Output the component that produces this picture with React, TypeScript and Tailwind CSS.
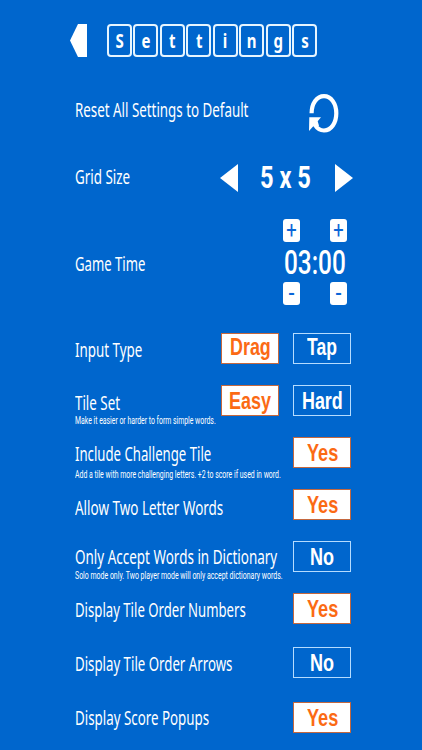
import { useLayoutEffect, useRef, useState } from "react";
import clsx from "clsx";

type FitTextProps = {
  text: string;
  width: number;
  className?: string;
};

// Condenses a line of text horizontally so that it takes exactly `width` pixels.
function FitText({ text, width, className }: FitTextProps) {
  const ref = useRef<HTMLSpanElement>(null);
  const [scale, setScale] = useState(1);

  useLayoutEffect(() => {
    if (ref.current) {
      setScale(width / ref.current.offsetWidth);
    }
  }, [text, width]);

  return (
    <span className={clsx("block", className)} style={{ width }}>
      <span ref={ref} className="inline-block origin-left whitespace-nowrap align-top" style={{ transform: `scaleX(${scale})` }}>
        {text}
      </span>
    </span>
  );
}

type Option = { text: string; width: number; on: boolean; pad: string };

type Row = {
  label: string;
  width: number;
  rowClass: string;
  labelClass: string;
  note?: string;
  noteWidth?: number;
  noteClass?: string;
  options: Option[];
};

const TITLE = ["S", "e", "t", "t", "i", "n", "g", "s"];

const LABEL = "font-['Noto_Sans',sans-serif] text-[19px] leading-5";

const ROWS: Row[] = [
  {
    label: "Input Type",
    width: 67.5,
    rowClass: "mt-[28px]",
    labelClass: "pt-[7px]",
    options: [
      { text: "Drag", width: 41, on: true, pad: "pb-[3px]" },
      { text: "Tap", width: 30, on: false, pad: "pb-[3px]" },
    ],
  },
  {
    label: "Tile Set",
    width: 45,
    rowClass: "mt-[21px]",
    labelClass: "pt-[8px]",
    note: "Make it easier or harder to form simple words.",
    noteWidth: 141,
    noteClass: "mt-[1px]",
    options: [
      { text: "Easy", width: 42, on: true, pad: "pt-px" },
      { text: "Hard", width: 41, on: false, pad: "pt-px" },
    ],
  },
  {
    label: "Include Challenge Tile",
    width: 136,
    rowClass: "mt-[21px]",
    labelClass: "pt-[7px]",
    note: "Add a tile with more challenging letters. +2 to score if used in word.",
    noteWidth: 206,
    noteClass: "mt-[4px]",
    options: [{ text: "Yes", width: 31, on: true, pad: "" }],
  },
  {
    label: "Allow Two Letter Words",
    width: 148,
    rowClass: "mt-[21px]",
    labelClass: "pt-[9px]",
    options: [{ text: "Yes", width: 31, on: true, pad: "" }],
  },
  {
    label: "Only Accept Words in Dictionary",
    width: 202,
    rowClass: "mt-[21px]",
    labelClass: "pt-[6px]",
    note: "Solo mode only. Two player mode will only accept dictionary words.",
    noteWidth: 208,
    noteClass: "mt-[2px]",
    options: [{ text: "No", width: 24, on: false, pad: "pt-px" }],
  },
  {
    label: "Display Tile Order Numbers",
    width: 171,
    rowClass: "mt-[21px]",
    labelClass: "pt-[7px]",
    options: [{ text: "Yes", width: 31, on: true, pad: "" }],
  },
  {
    label: "Display Tile Order Arrows",
    width: 157.5,
    rowClass: "mt-[23px]",
    labelClass: "pt-[7px]",
    options: [{ text: "No", width: 24, on: false, pad: "pt-px" }],
  },
  {
    label: "Display Score Popups",
    width: 134,
    rowClass: "mt-[24px]",
    labelClass: "pt-[6px]",
    options: [{ text: "Yes", width: 31, on: true, pad: "" }],
  },
];

function OptionButton({ text, width, on, pad }: Option) {
  return (
    <button
      type="button"
      className={clsx(
        "flex h-[31px] w-[58px] items-center justify-center border font-['Liberation_Sans',sans-serif] text-[24px] leading-6 font-bold",
        on ? "border-[#c4683f] bg-white text-[#fb6a14]" : "border-[#b5dcff] text-white",
        pad
      )}
    >
      <FitText text={text} width={width} />
    </button>
  );
}

function StepButton({ sign }: { sign: "+" | "-" }) {
  return (
    <button
      type="button"
      className="flex h-[23px] w-[17px] items-center justify-center rounded-[3px] bg-white font-['Roboto',sans-serif] leading-5 text-[#0a66d8]"
    >
      {sign === "+" ? (
        <span className="scale-x-[0.8] text-[23px]">+</span>
      ) : (
        <span className="text-[18px] leading-4 font-bold">-</span>
      )}
    </button>
  );
}

export default function App() {
  return (
    <div className="h-[750px] w-[422px] overflow-hidden bg-[#0066cd] text-white">
      <header className="flex h-[84px] items-start pt-6 pl-[70px]">
        <svg width="17" height="33" viewBox="0 0 17 33" fill="#fff">
          <path d="M0 16.5 8 0h9v33H8z" />
        </svg>
        <div className="ml-5 flex gap-[1.6px]">
          {TITLE.map((letter, i) => (
            <span
              key={i}
              className="flex h-[33px] w-[24.9px] items-center justify-center rounded-[4px] border-2 border-[#e6f5ff] pt-px font-['Noto_Sans',sans-serif] text-[20px] leading-5 font-bold"
            >
              <span className="scale-x-75">{letter}</span>
            </span>
          ))}
        </div>
      </header>

      <main className="ml-[75px] w-[278px]">
        <div className="flex h-[66px] items-start justify-between">
          <FitText text="Reset All Settings to Default" width={173.5} className={clsx(LABEL, "mt-4")} />
          <svg className="mt-[9px] mr-[13px]" width="33" height="41" viewBox="0 0 33 41">
            <path
              d="M4.6 20.3C4.6 10.5 9.8 3.1 17 3.1s12.300 7.600 12.300 17.200S24.200 37.500 17 37.500c-3.700 0-6.800-1.900-9-5.500"
              fill="none"
              stroke="#fff"
              strokeWidth="4.2"
            />
            <path d="M2.3 24.300h11.700l-3.300 4 1.300 4.500-3.200 2L6.500 33 2 38z" fill="#fff" />
          </svg>
        </div>

        <div className="flex h-[69px] items-start justify-between">
          <FitText text="Grid Size" width={55} className={clsx(LABEL, "mt-[17px]")} />
          <div className="mt-[14px] flex h-7 items-center">
            <svg width="18" height="28" viewBox="0 0 18 28" fill="#fff">
              <path d="M0 14 18 0v28z" />
            </svg>
            <FitText
              text="5 x 5"
              width={51}
              className="mr-6 mb-[3px] ml-[22px] font-['Roboto',sans-serif] text-[32px] leading-8 font-bold"
            />
            <svg width="18" height="28" viewBox="0 0 18 28" fill="#fff">
              <path d="M18 14 0 0v28z" />
            </svg>
          </div>
        </div>

        <div className="flex h-[86px] items-start justify-between">
          <FitText text="Game Time" width={70.5} className={clsx(LABEL, "mt-[35px]")} />
          <div className="mr-[6px] w-16">
            <div className="flex justify-between">
              <StepButton sign="+" />
              <StepButton sign="+" />
            </div>
            <FitText
              text="03:00"
              width={62}
              className="mt-[6px] mb-1 ml-px h-[30px] font-['Roboto',sans-serif] text-[33px] leading-[30px] font-medium"
            />
            <div className="flex justify-between">
              <StepButton sign="-" />
              <StepButton sign="-" />
            </div>
          </div>
        </div>

        {ROWS.map((row) => (
          <div key={row.label} className={clsx("flex h-[31px] w-[276px] items-start justify-between", row.rowClass)}>
            <div className="w-0">
              <FitText text={row.label} width={row.width} className={clsx(LABEL, row.labelClass)} />
              {row.note && (
                <FitText
                  text={row.note}
                  width={row.noteWidth ?? 0}
                  className={clsx("font-['Roboto',sans-serif] text-[10px] leading-[14px]", row.noteClass)}
                />
              )}
            </div>
            <div className="flex gap-[14px]">
              {row.options.map((option) => (
                <OptionButton key={option.text} {...option} />
              ))}
            </div>
          </div>
        ))}
      </main>
    </div>
  );
}
